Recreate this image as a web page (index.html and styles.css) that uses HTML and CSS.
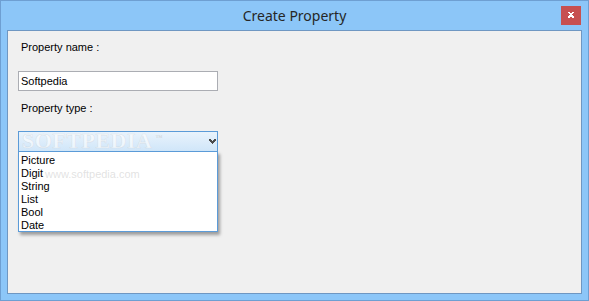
FILE: index.html
```html
<!DOCTYPE html>
<html>
<head>
<meta charset="utf-8">
<title>Create Property</title>
<link rel="stylesheet" href="styles.css">
</head>
<body>
<div class="window">
  <div class="titlebar">
    <span></span>
    <span class="title">Create Property</span>
    <button class="close" aria-label="Close">
      <svg width="8" height="7" viewBox="0 0 8 7"><path d="M1 0h2v1h2V0h2v1H6v1H5v1h1v1h1v2H5V5H3v1H1V4h1V3h1V2H2V1H1z" fill="#fff"/></svg>
    </button>
  </div>
  <div class="client">
    <div class="label first">Property name :</div>
    <div class="textbox">Softpedia</div>
    <div class="label second">Property type :</div>
    <div class="combo-wrap">
      <div class="combo">
        <svg class="arrow" width="7" height="5" viewBox="0 0 7 5"><path d="M0 0h2v1h1v1h1V1h1V0h2v2H6v1H5v1H4v1H3V4H2V3H1V2H0z" fill="#4b4b4b"/></svg>
      </div>
      <ul class="list">
        <li>Picture</li>
        <li>Digit</li>
        <li>String</li>
        <li>List</li>
        <li>Bool</li>
        <li>Date</li>
      </ul>
      <div class="wm-logo">SOFTPEDIA<span class="tm">™</span></div>
      <div class="wm-url">www.softpedia.com</div>
    </div>
  </div>
</div>
</body>
</html>
```
FILE: styles.css
```css
* { box-sizing: border-box; }
html, body { margin: 0; padding: 0; }
body { width: 589px; height: 301px; overflow: hidden; font-family: "Liberation Sans", Arial, sans-serif; }

.window {
  width: 589px;
  height: 301px;
  border: 1px solid #6e9fd2;
  background: #8cc6f8;
  display: flex;
  flex-direction: column;
  padding: 0 6px 6px 6px;
}

.titlebar {
  height: 29px;
  display: grid;
  grid-template-columns: 1fr auto 1fr;
  align-items: start;
}
.title {
  font-family: "Noto Sans", "Open Sans", sans-serif;
  font-size: 14px;
  color: #262626;
  line-height: 20px;
  padding-top: 5px;
}
.close {
  justify-self: end;
  margin: 5px 1px 0 0;
  width: 20px;
  height: 19px;
  border: 0;
  padding: 0;
  background: #c75050;
  display: flex;
  align-items: center;
  justify-content: center;
}

.client {
  flex: 1;
  border: 1px solid #6f97c2;
  background: #f0f0f0;
  padding: 10px 0 0 10px;
  font-size: 11px;
  color: #000;
}

.label {
  line-height: 13px;
  padding-left: 3px;
}
.label.second { margin-top: 11px; }

.textbox {
  margin-top: 17px;
  width: 200px;
  height: 20px;
  border: 1px solid #abadb3;
  background: #fff;
  line-height: 18px;
  padding-left: 2px;
}

.combo-wrap {
  position: relative;
  margin-top: 16px;
  width: 200px;
}
.combo {
  height: 21px;
  border: 1px solid #5b9bd8;
  background: linear-gradient(#e9f3fc, #d0e6f9);
  display: flex;
  justify-content: flex-end;
  align-items: center;
  padding-right: 1px;
}

.list {
  list-style: none;
  margin: -1px 0 0 0;
  padding: 2px 0 0 2px;
  border: 1px solid #5b9bd8;
  background: #fff;
  height: 81px;
  box-shadow: 2px 3px 3px rgba(0,0,0,0.35);
}
.list li {
  line-height: 13px;
  height: 13px;
}

.wm-logo {
  position: absolute;
  left: 4px;
  top: 0;
  font-family: "Liberation Serif", serif;
  font-weight: bold;
  font-size: 22px;
  line-height: 19px;
  height: 19px;
  letter-spacing: 0.5px;
  color: rgba(255,255,255,0.6);
  -webkit-text-stroke: 0.6px rgba(180,185,190,0.3);
  pointer-events: none;
}
.wm-logo .tm { font-size: 7px; position: relative; top: -8px; color: rgba(200,200,200,0.6); -webkit-text-stroke: 0; margin-left: 3px; }
.wm-url {
  position: absolute;
  left: 27px;
  top: 37px;
  font-family: "Liberation Sans", sans-serif;
  font-size: 11px;
  color: rgba(190,190,190,0.45);
  pointer-events: none;
}
```
